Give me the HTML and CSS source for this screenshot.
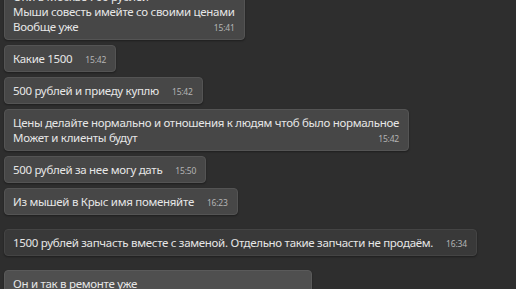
FILE: index.html
```html
<!DOCTYPE html>
<html lang="ru">
<head>
<meta charset="utf-8">
<link rel="stylesheet" href="styles.css">
</head>
<body>
<div class="chat">
  <div class="bubble">
    <div class="line">Они в Москве 700 рублей</div>
    <div class="line">Мыши совесть имейте со своими ценами</div>
    <div class="line last"><span>Вообще уже</span><span class="time">15:41</span></div>
  </div>
  <div class="bubble">
    <div class="line last"><span>Какие 1500</span><span class="time">15:42</span></div>
  </div>
  <div class="bubble">
    <div class="line last"><span>500 рублей и приеду куплю</span><span class="time">15:42</span></div>
  </div>
  <div class="bubble">
    <div class="line">Цены делайте нормально и отношения к людям чтоб было нормальное</div>
    <div class="line last"><span>Может и клиенты будут</span><span class="time">15:42</span></div>
  </div>
  <div class="bubble">
    <div class="line last"><span>500 рублей за нее могу дать</span><span class="time">15:50</span></div>
  </div>
  <div class="bubble">
    <div class="line last"><span>Из мышей в Крыс имя поменяйте</span><span class="time">16:23</span></div>
  </div>
  <div class="bubble own">
    <div class="line last"><span>1500 рублей запчасть вместе с заменой. Отдельно такие запчасти не продаём.</span><span class="time">16:34</span></div>
  </div>
  <div class="bubble light">
    <div class="line">Он и так в ремонте уже</div>
  </div>
</div>
</body>
</html>
```
FILE: styles.css
```css
html, body {
  margin: 0;
  padding: 0;
  background: #2e2e2e;
  overflow: hidden;
}
body {
  font-family: "Noto Sans", "Open Sans", sans-serif;
  font-size: 11.5px;
  letter-spacing: -0.3px;
  color: #e6e6e6;
}
.chat {
  display: flex;
  flex-direction: column;
  align-items: flex-start;
  gap: 5px;
  padding: 0 4px;
  margin-top: -17px;
}
.bubble {
  background: #474747;
  border: 1px solid #545454;
  border-radius: 4px;
  padding: 5px 9px 5px 8px;
  box-shadow: 0 1px 2px rgba(0,0,0,0.35);
}
.line {
  line-height: 15px;
  height: 15px;
  white-space: nowrap;
}
.last {
  display: flex;
  justify-content: space-between;
  align-items: flex-end;
  gap: 13px;
}
.time {
  font-size: 8.5px;
  line-height: 13px;
  letter-spacing: -0.2px;
  color: #b4b4b4;
}
.own {
  background: #393939;
  border-color: #444;
  margin-top: 9px;
}
.light {
  background: #4f4f4f;
  border-color: #5a5a5a;
  margin-top: 9px;
  width: 289px;
  height: 40px;
}
```
